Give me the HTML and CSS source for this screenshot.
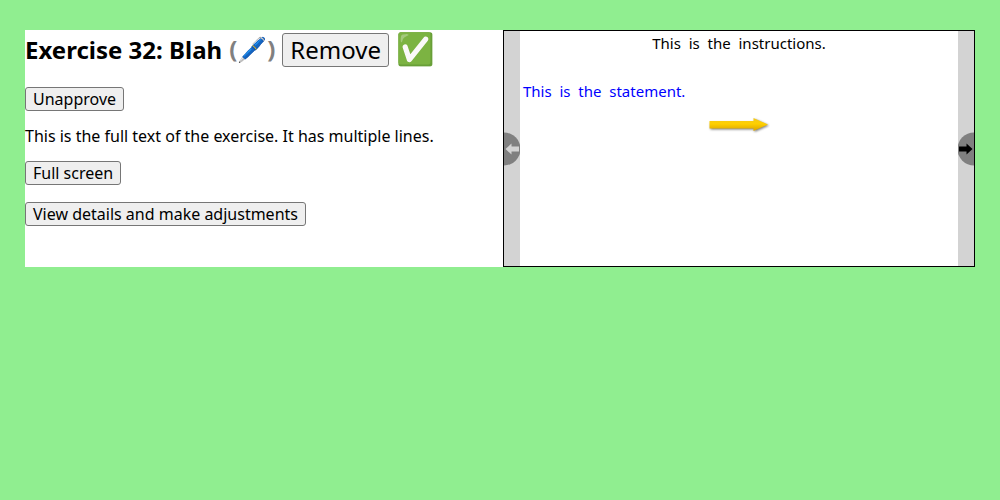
FILE: index.html
```html
<!DOCTYPE html>
<html lang="en">
<head>
<meta charset="utf-8">
<title>Exercise 32: Blah</title>
<link rel="stylesheet" href="styles.css">
</head>
<body>
<main class="exercise">
  <section class="details">
    <h2 class="title">
      <span>Exercise 32: Blah</span>
      <span class="kind">(<span class="emoji">🖊️</span>)</span>
      <button class="btn" type="button">Remove</button>
      <span class="emoji status">✅</span>
    </h2>
    <button class="btn" type="button">Unapprove</button>
    <p class="text">This is the full text of the exercise. It has multiple lines.</p>
    <button class="btn" type="button">Full screen</button>
    <button class="btn adjust" type="button">View details and make adjustments</button>
  </section>
  <section class="preview">
    <button class="nav prev" type="button" aria-label="Previous" disabled>
      <svg class="disc" viewBox="0 0 16 34"><circle cx="0" cy="17" r="16.5" fill="#808080"/><path d="M1.5 17 7.5 11.500V14.500H15V19.500H7.500V22.500Z" fill="#d3d3d3"/></svg>
    </button>
    <div class="page">
      <p class="instructions">This  is  the  instructions.</p>
      <p class="statement">This  is  the  statement.</p>
      <svg class="arrow" viewBox="0 0 62 18" role="img" aria-label="Arrow">
        <defs>
          <linearGradient id="gold" x1="0" y1="0" x2="0" y2="1"><stop offset="0" stop-color="#f3c91c"/><stop offset=".45" stop-color="#ffd000"/><stop offset="1" stop-color="#d9a300"/></linearGradient>
          <filter id="soft" x="-10%" y="-30%" width="120%" height="180%"><feGaussianBlur stdDeviation=".8"/></filter>
        </defs>
        <path d="M2.500 6.500H46.500V3L61 9.500 46.500 16V13.500H2.500Z" fill="#555" opacity=".75" filter="url(#soft)"/>
        <path d="M1.500 5H45.500V2L60 8.500 45.500 15V12.500H1.500Z" fill="url(#gold)"/>
      </svg>
    </div>
    <button class="nav next" type="button" aria-label="Next">
      <svg class="disc" viewBox="0 0 16 34"><circle cx="16" cy="17" r="16.500" fill="#808080"/><path d="M14.500 17 8.500 11.500V14.500H1V19.500H8.500V22.500Z" fill="#000"/></svg>
    </button>
  </section>
</main>
</body>
</html>
```
FILE: styles.css
```css
* { box-sizing: border-box; }
body {
  margin: 0;
  padding: 30px 25px;
  background: #90ee90;
  color: #000;
  font: 16px/24px "Noto Sans", sans-serif;
}
.exercise {
  display: grid;
  grid-template-columns: minmax(0, 478fr) minmax(0, 472fr);
  background: #fff;
}
.details {
  display: flex;
  flex-direction: column;
  align-items: flex-start;
}
.title {
  display: flex;
  align-items: center;
  gap: 7px;
  margin: 0 0 18px;
  font-size: 24px;
  line-height: 38px;
}
.kind { color: #808080; }
.emoji { font-family: "Noto Color Emoji", "Noto Sans", sans-serif; }
.status { font-size: 31px; }
.btn {
  padding: 1px 7px;
  border: 1px solid #767676;
  border-radius: 3px;
  background: #efefef;
  color: #000;
  font: inherit;
  font-weight: 400;
  line-height: 1.25;
}
.text { margin: 13px 0; }
.adjust { margin-top: 17px; }
.preview {
  display: grid;
  grid-template-columns: 16px minmax(0, 1fr) 16px;
  aspect-ratio: 472 / 237;
  border: 1px solid #000;
  font-size: 15px;
}
.nav {
  display: flex;
  align-items: center;
  padding: 0;
  border: 0;
  background: #d3d3d3;
}
.disc { width: 100%; height: 34px; }
.page {
  display: flex;
  flex-direction: column;
  padding: 0 3px;
  white-space: pre-wrap;
}
.instructions { margin: 0 0 24px; text-align: center; }
.statement { margin: 0 0 13px; color: #00f; }
.arrow { width: 62px; height: 18px; align-self: center; }
```
